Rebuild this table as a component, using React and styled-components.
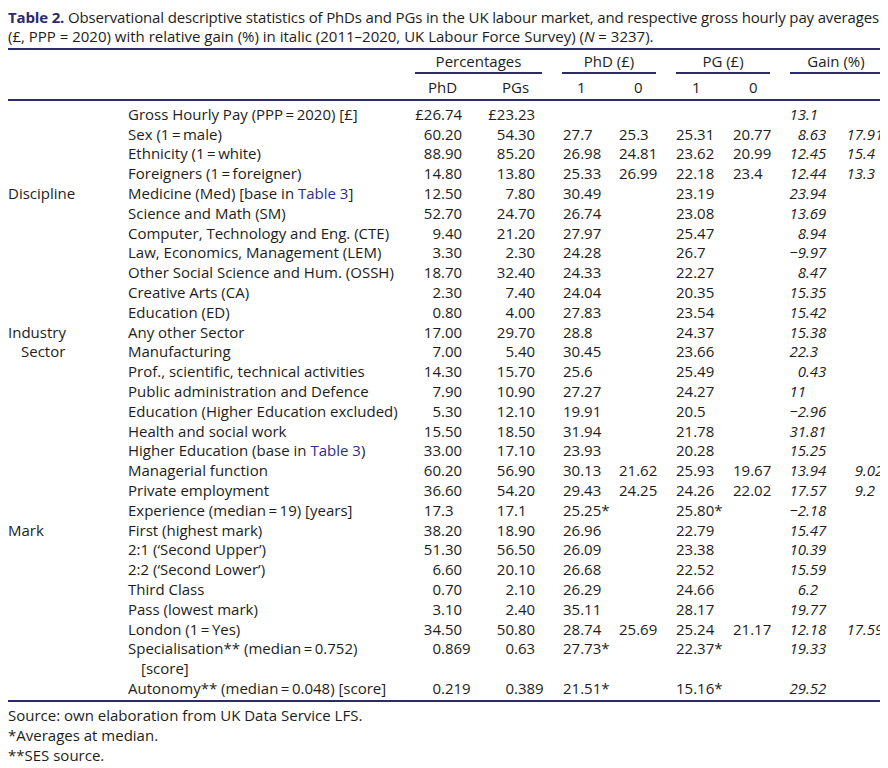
import React from 'react';
import styled, { createGlobalStyle } from 'styled-components';

const NAVY = '#2c2a6b';
const INK = '#1d1d1b';

const GlobalStyle = createGlobalStyle`
  body {
    margin: 8px;
    background: #fff;
    color: ${INK};
    font-family: 'Open Sans', 'Noto Sans', sans-serif;
    font-size: 15px;
  }
`;

const Page = styled.div`
  width: 874px;
`;

const Caption = styled.div`
  line-height: 19px;
  margin-bottom: 2px;
`;

const CaptionLine = styled.div`
  white-space: nowrap;
  letter-spacing: ${(p) => p.$ls || 0}px;
`;

const TableNo = styled.span`
  color: ${NAVY};
  font-weight: 700;
`;

const Grid = styled.div`
  display: grid;
  grid-template-columns: 120px 287px 70px 67px 57px 57px 57px 57px 58px 44px;
  align-items: start;
  line-height: 19.8px;
`;

const Rule = styled.div`
  grid-column: 1 / -1;
  height: 2px;
  background: ${NAVY};
  margin: ${(p) => p.$m || '0'};
`;

const GroupHead = styled.div`
  grid-column: ${(p) => p.$col};
  margin: ${(p) => p.$m};
  padding-top: 1px;
  text-align: center;
  border-bottom: 2px solid ${NAVY};
  line-height: 21px;
`;

const SubHead = styled.div`
  grid-column: ${(p) => p.$col};
  padding-left: ${(p) => p.$pad}px;
  padding-top: 4px;
  padding-bottom: 1px;
`;

const Spacer = styled.div`
  grid-column: ${(p) => p.$col};
`;

const Group = styled.div`
  padding-left: ${(p) => (p.$indent ? 13 : 0)}px;
  white-space: nowrap;
`;

const Label = styled.div`
  padding-left: 13px;
  text-indent: -13px;
  white-space: nowrap;
`;

const Link = styled.span`
  color: #2b2f8c;
`;

const Cell = styled.div`
  padding-left: ${(p) => p.$pad || 0}px;
  white-space: nowrap;
`;

const DecCell = styled.div`
  display: flex;
  font-style: ${(p) => (p.$italic ? 'italic' : 'normal')};
  white-space: nowrap;
`;

const Int = styled.span`
  flex: 0 0 ${(p) => p.$w}px;
  text-align: right;
`;

const Notes = styled.div`
  padding-top: 3px;
  line-height: 20px;
`;

const Dec = ({ value, w, italic }) => {
  if (!value) return <Cell />;
  const i = value.indexOf('.');
  const int = i < 0 ? value : value.slice(0, i);
  const frac = i < 0 ? '' : value.slice(i);
  return (
    <DecCell $italic={italic}>
      <Int $w={w}>{int}</Int>
      <span>{frac}</span>
    </DecCell>
  );
};

const withLinks = (text) =>
  text.split(/(Table 3)/).map((part, i) =>
    part === 'Table 3' ? <Link key={i}>{part}</Link> : part,
  );

const T = '\u2009=\u2009';

// group, label, phd%, pg%, phd1, phd0, pg1, pg0, gain1, gain2
const rows = [
  ['', `Gross Hourly Pay (PPP${T}2020) [£]`, '£26.74', '£23.23', '', '', '', '', '13.1', ''],
  ['', `Sex (1${T}male)`, '60.20', '54.30', '27.7', '25.3', '25.31', '20.77', '8.63', '17.91'],
  ['', `Ethnicity (1${T}white)`, '88.90', '85.20', '26.98', '24.81', '23.62', '20.99', '12.45', '15.4'],
  ['', `Foreigners (1${T}foreigner)`, '14.80', '13.80', '25.33', '26.99', '22.18', '23.4', '12.44', '13.3'],
  ['Discipline', 'Medicine (Med) [base in Table 3]', '12.50', '7.80', '30.49', '', '23.19', '', '23.94', ''],
  ['', 'Science and Math (SM)', '52.70', '24.70', '26.74', '', '23.08', '', '13.69', ''],
  ['', 'Computer, Technology and Eng. (CTE)', '9.40', '21.20', '27.97', '', '25.47', '', '8.94', ''],
  ['', 'Law, Economics, Management (LEM)', '3.30', '2.30', '24.28', '', '26.7', '', '\u22129.97', ''],
  ['', 'Other Social Science and Hum. (OSSH)', '18.70', '32.40', '24.33', '', '22.27', '', '8.47', ''],
  ['', 'Creative Arts (CA)', '2.30', '7.40', '24.04', '', '20.35', '', '15.35', ''],
  ['', 'Education (ED)', '0.80', '4.00', '27.83', '', '23.54', '', '15.42', ''],
  ['Industry', 'Any other Sector', '17.00', '29.70', '28.8', '', '24.37', '', '15.38', ''],
  ['>Sector', 'Manufacturing', '7.00', '5.40', '30.45', '', '23.66', '', '22.3', ''],
  ['', 'Prof., scientific, technical activities', '14.30', '15.70', '25.6', '', '25.49', '', '0.43', ''],
  ['', 'Public administration and Defence', '7.90', '10.90', '27.27', '', '24.27', '', '11', ''],
  ['', 'Education (Higher Education excluded)', '5.30', '12.10', '19.91', '', '20.5', '', '\u22122.96', ''],
  ['', 'Health and social work', '15.50', '18.50', '31.94', '', '21.78', '', '31.81', ''],
  ['', 'Higher Education (base in Table 3)', '33.00', '17.10', '23.93', '', '20.28', '', '15.25', ''],
  ['', 'Managerial function', '60.20', '56.90', '30.13', '21.62', '25.93', '19.67', '13.94', '9.02'],
  ['', 'Private employment', '36.60', '54.20', '29.43', '24.25', '24.26', '22.02', '17.57', '9.2'],
  ['', `Experience (median${T}19) [years]`, '17.3', '17.1', '25.25*', '', '25.80*', '', '\u22122.18', ''],
  ['Mark', 'First (highest mark)', '38.20', '18.90', '26.96', '', '22.79', '', '15.47', ''],
  ['', '2:1 (\u2018Second Upper\u2019)', '51.30', '56.50', '26.09', '', '23.38', '', '10.39', ''],
  ['', '2:2 (\u2018Second Lower\u2019)', '6.60', '20.10', '26.68', '', '22.52', '', '15.59', ''],
  ['', 'Third Class', '0.70', '2.10', '26.29', '', '24.66', '', '6.2', ''],
  ['', 'Pass (lowest mark)', '3.10', '2.40', '35.11', '', '28.17', '', '19.77', ''],
  ['', `London (1${T}Yes)`, '34.50', '50.80', '28.74', '25.69', '25.24', '21.17', '12.18', '17.59'],
  ['', `Specialisation** (median${T}0.752)|[score]`, '0.869', '0.63', '27.73*', '', '22.37*', '', '19.33', ''],
  ['', `Autonomy** (median${T}0.048) [score]`, '0.219', '0.389', '21.51*', '', '15.16*', '', '29.52', ''],
];

const Row = ({ r }) => {
  const [group, label, a, b, p1, p0, q1, q0, g1, g2] = r;
  const indent = group.startsWith('>');
  const lines = label.split('|');
  return (
    <>
      <Group $indent={indent}>{indent ? group.slice(1) : group}</Group>
      <Label>
        {lines.map((l, i) => (
          <React.Fragment key={i}>
            {i > 0 && <br />}
            {withLinks(l)}
          </React.Fragment>
        ))}
      </Label>
      <Dec value={a} w={26} />
      <Dec value={b} w={29} />
      <Cell $pad={11}>{p1}</Cell>
      <Cell $pad={10}>{p0}</Cell>
      <Cell $pad={10}>{q1}</Cell>
      <Cell $pad={10}>{q0}</Cell>
      <Dec value={g1} w={26} italic />
      <Dec value={g2} w={25} italic />
    </>
  );
};

export default function App() {
  return (
    <Page>
      <GlobalStyle />
      <Caption>
        <CaptionLine $ls={-0.15}>
          <TableNo>Table 2.</TableNo> Observational descriptive statistics of PhDs and PGs in
          the UK labour market, and respective gross hourly pay averages
        </CaptionLine>
        <CaptionLine>
          (£, PPP = 2020) with relative gain (%) in italic (2011{'\u2013'}2020, UK Labour Force
          Survey) (<i>N</i> = 3237).
        </CaptionLine>
      </Caption>
      <Grid>
        <Rule />
        <Spacer $col="1 / 3" />
        <GroupHead $col="3 / 5" $m="0 10px 0 0">Percentages</GroupHead>
        <GroupHead $col="5 / 7" $m="0 10px">PhD (£)</GroupHead>
        <GroupHead $col="7 / 9" $m="0 10px">PG (£)</GroupHead>
        <GroupHead $col="9 / 11" $m="0 0 0 10px">Gain (%)</GroupHead>
        <Spacer $col="1 / 3" />
        <SubHead $col="3" $pad={13}>PhD</SubHead>
        <SubHead $col="4" $pad={17}>PGs</SubHead>
        <SubHead $col="5" $pad={25}>1</SubHead>
        <SubHead $col="6" $pad={25}>0</SubHead>
        <SubHead $col="7" $pad={26}>1</SubHead>
        <SubHead $col="8" $pad={26}>0</SubHead>
        <Spacer $col="9 / 11" />
        <Rule $m="0 0 4px" />
        {rows.map((r, i) => (
          <Row key={i} r={r} />
        ))}
        <Rule $m="1px 0 0" />
      </Grid>
      <Notes>
        <div>Source: own elaboration from UK Data Service LFS.</div>
        <div>*Averages at median.</div>
        <div>**SES source.</div>
      </Notes>
    </Page>
  );
}
